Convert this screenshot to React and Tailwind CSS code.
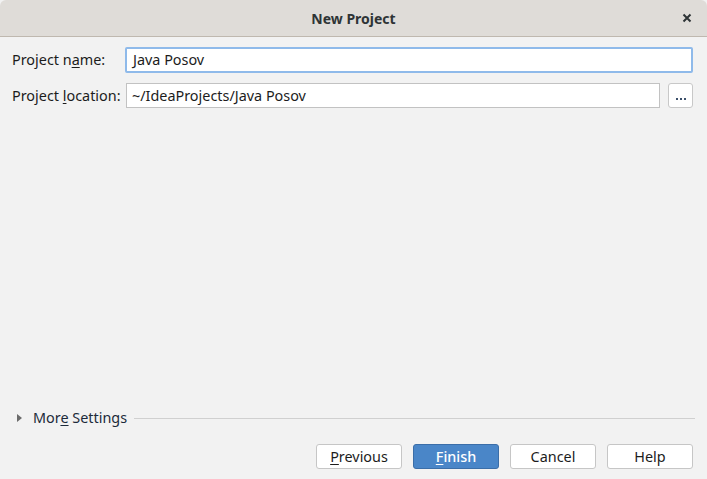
import React from 'react';

export default function App() {
  const buttons = [
    { label: 'Previous', key: 'P', rest: 'revious' },
    { label: 'Finish', key: 'F', rest: 'inish', primary: true },
    { label: 'Cancel' },
    { label: 'Help' },
  ];

  return (
    <div className="w-[707px] h-[479px] bg-[#f2f2f2] flex flex-col text-[14.4px] text-[#1c1c1c]" style={{ fontFamily: '"Noto Sans", sans-serif' }}>
      <div className="h-[37px] shrink-0 bg-[#dfdcd8] border-b border-[#bfb8af] rounded-t-[6px] flex items-center justify-center relative">
        <span className="font-bold text-[#2e3436] text-[14px]">New Project</span>
        <svg className="absolute right-[15px] top-[13px]" width="10" height="10" viewBox="0 0 10 10">
          <path d="M1.5 1.5 L8.5 8.5 M8.5 1.5 L1.5 8.5" stroke="#2e3436" strokeWidth="2" />
        </svg>
      </div>

      <div className="flex-1 flex flex-col px-[12px] pt-[10px]">
        <div className="flex items-center h-[26px]">
          <span className="w-[113px] shrink-0">Project n<span className="underline underline-offset-2">a</span>me:</span>
          <div className="flex-1 h-[26px] mr-[2px] bg-white border-2 border-[#8fbaea] rounded-[2px] flex items-center pl-[6px]">Java Posov</div>
        </div>
        <div className="flex items-center h-[25px] mt-[10px]">
          <span className="w-[114px] shrink-0">Project <span className="underline underline-offset-2">l</span>ocation:</span>
          <div className="flex-1 h-[25px] bg-white border border-[#c2c2c2] flex items-center pl-[5px]">~/IdeaProjects/Java Posov</div>
          <div className="w-[25px] h-[25px] ml-[8px] mr-[2px] bg-white border border-[#c8c8c8] rounded-[3px] flex items-end justify-center pb-[7px]">
            <span className="flex gap-[2px]">
              <span className="w-[2px] h-[2px] bg-[#3b4f6a]"></span>
              <span className="w-[2px] h-[2px] bg-[#3b4f6a]"></span>
              <span className="w-[2px] h-[2px] bg-[#3b4f6a]"></span>
            </span>
          </div>
        </div>

        <div className="flex-1"></div>

        <div className="flex items-center h-[20px] mb-[16px]">
          <svg className="ml-[5px] mr-[10px]" width="6" height="8" viewBox="0 0 6 8">
            <path d="M0 0 L5 4 L0 8 Z" fill="#6b6b6b" />
          </svg>
          <span className="text-[#1c2a3a]">Mor<span className="underline underline-offset-2">e</span> Settings</span>
          <div className="flex-1 h-px bg-[#d0d0d0] ml-[7px]"></div>
        </div>

        <div className="flex justify-end gap-[11px] pr-[2px] mb-[10px]">
          {buttons.map((b) => (
            <div
              key={b.label}
              className={`w-[86px] h-[25px] rounded-[3px] border flex items-center justify-center ${
                b.primary ? 'bg-[#4a86c8] border-[#3b6ea8] text-white font-medium' : 'bg-white border-[#c6c6c6] text-[#1c1c1c]'
              }`}
            >
              {b.key ? (
                <span><span className="underline underline-offset-2">{b.key}</span>{b.rest}</span>
              ) : (
                <span>{b.label}</span>
              )}
            </div>
          ))}
        </div>
      </div>
    </div>
  );
}
